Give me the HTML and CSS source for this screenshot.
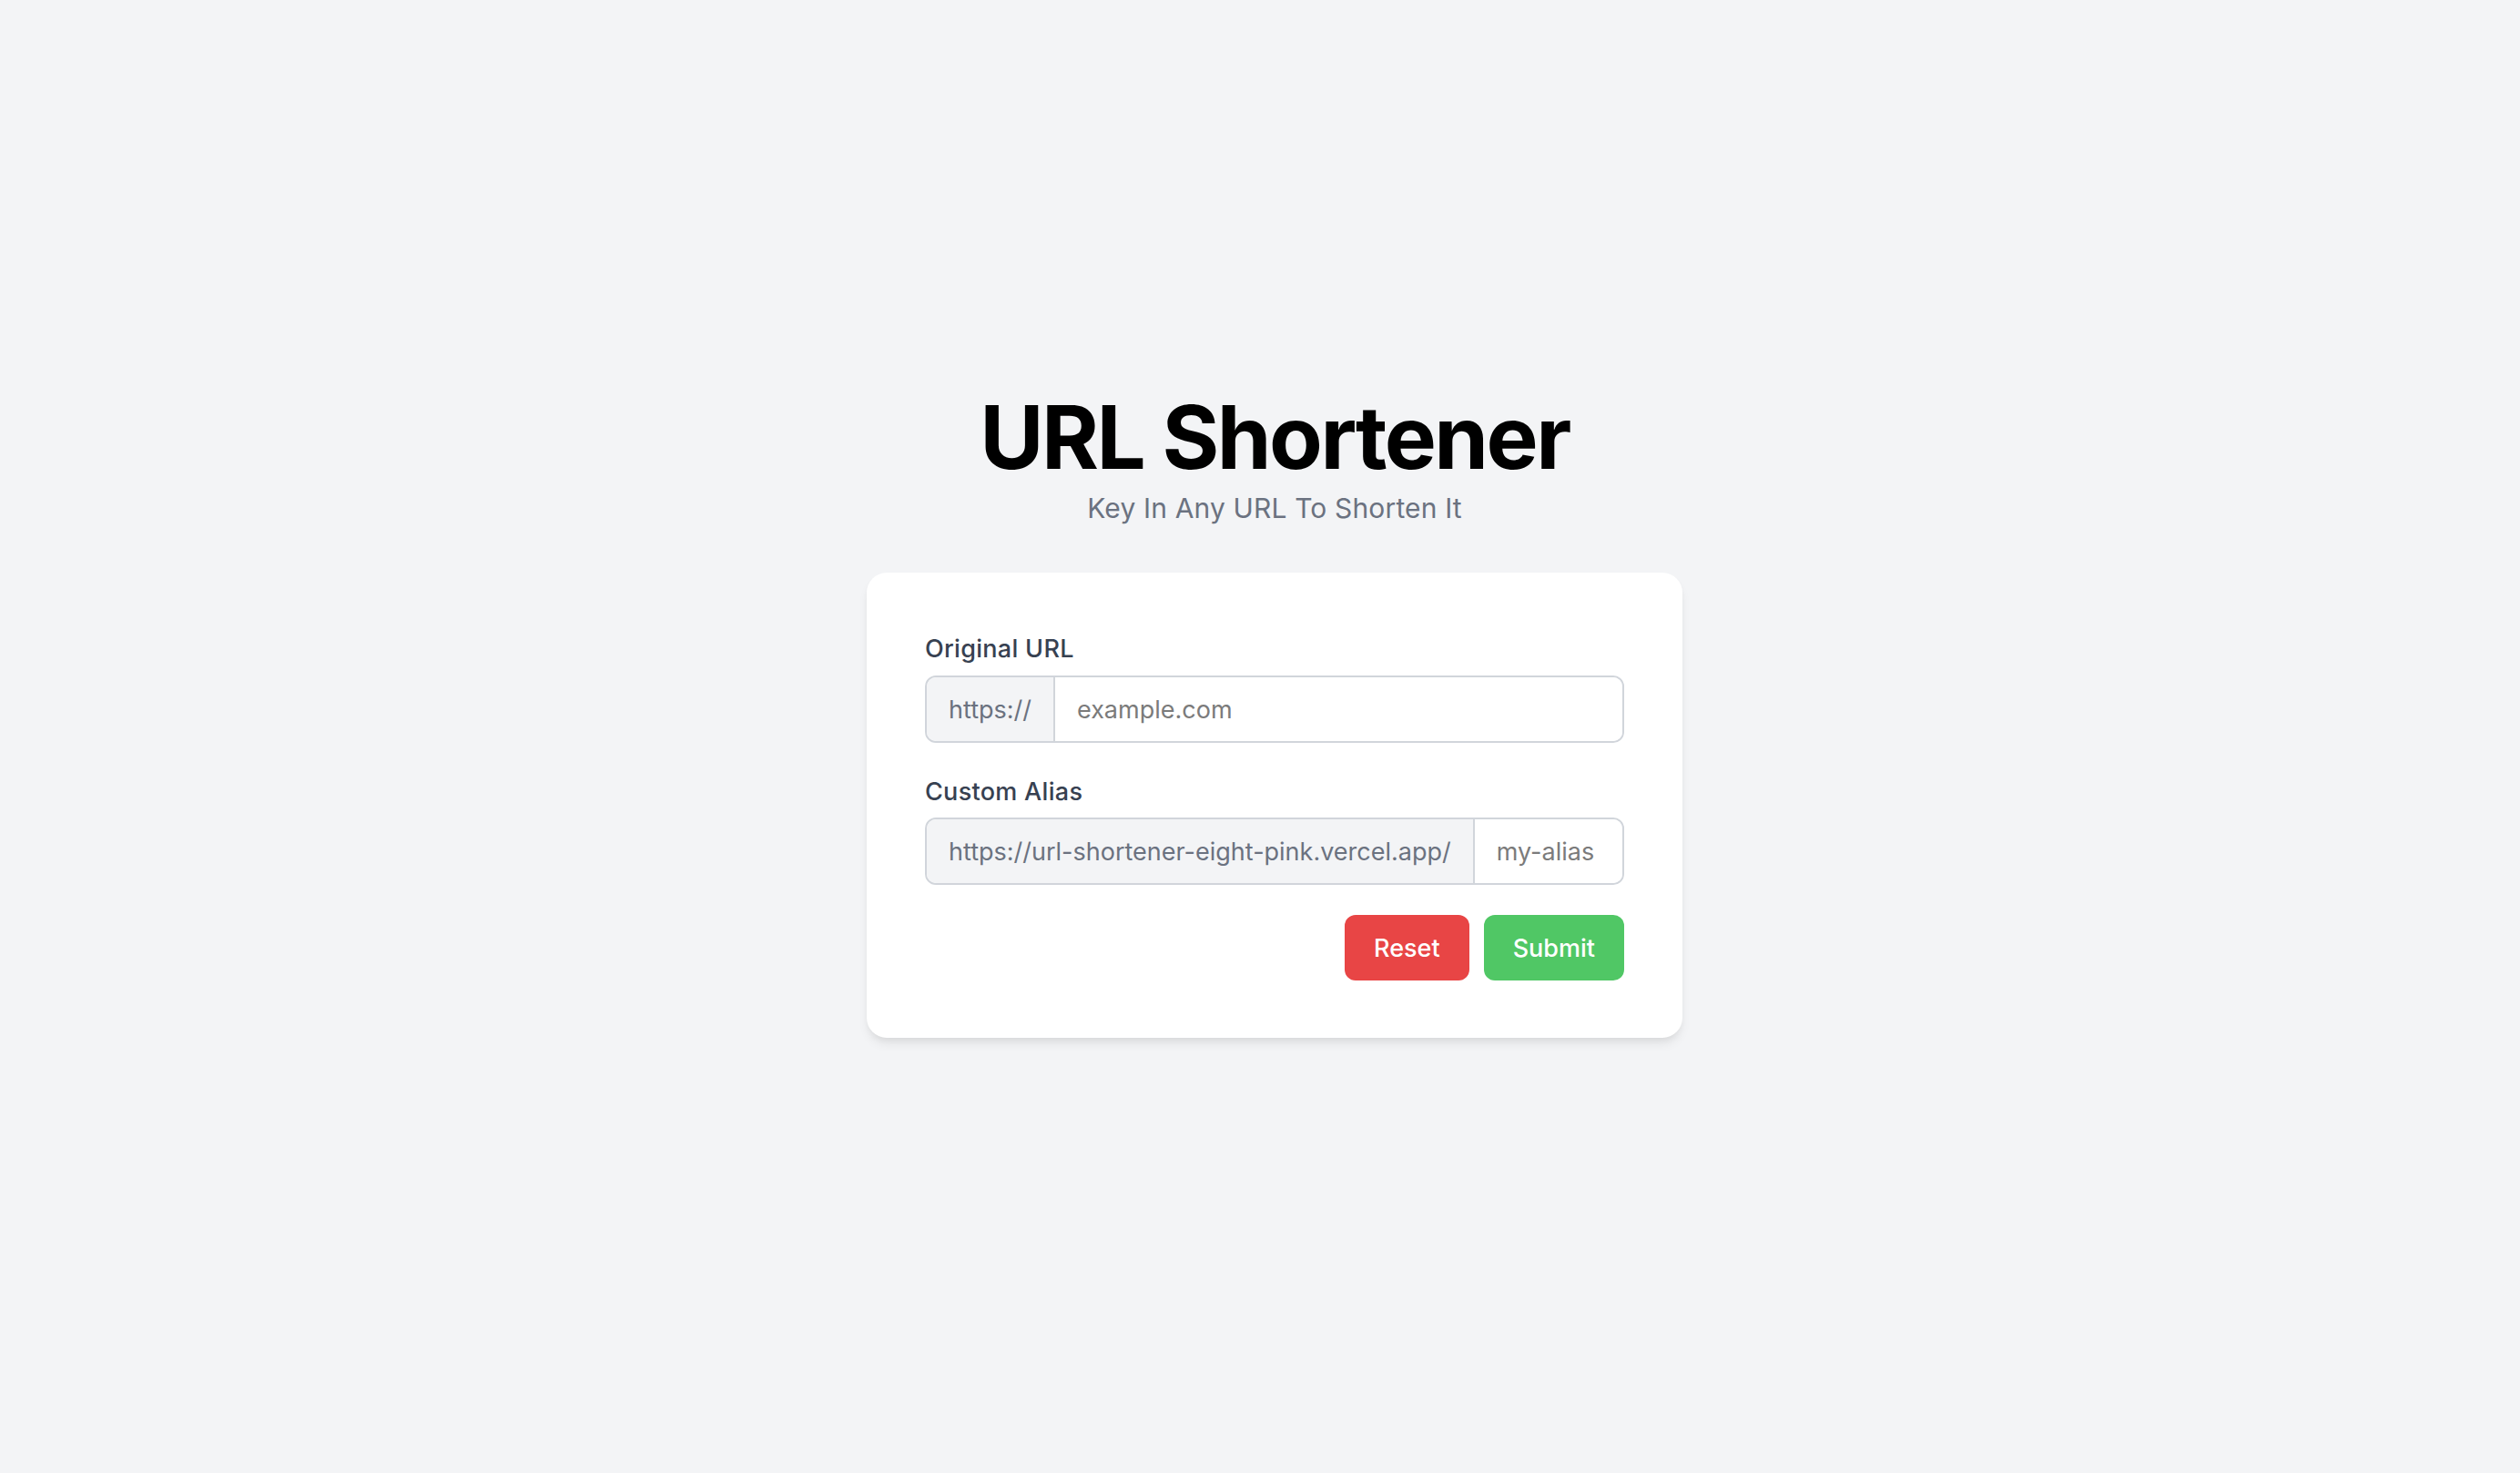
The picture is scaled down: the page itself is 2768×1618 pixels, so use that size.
FILE: index.html
```html
<!DOCTYPE html>
<html lang="en">
<head>
<meta charset="utf-8">
<title>URL Shortener</title>
<link rel="stylesheet" href="styles.css">
</head>
<body>
<main class="page">
  <header class="hero">
    <h1 class="title">URL Shortener</h1>
    <p class="subtitle">Key In Any URL To Shorten It</p>
  </header>
  <form class="card">
    <div class="field">
      <label class="label" for="url">Original URL</label>
      <div class="group">
        <span class="addon">https://</span>
        <input id="url" class="input" type="text" placeholder="example.com">
      </div>
    </div>
    <div class="field">
      <label class="label" for="alias">Custom Alias</label>
      <div class="group">
        <span class="addon">https://url-shortener-eight-pink.vercel.app/</span>
        <input id="alias" class="input" type="text" placeholder="my-alias">
      </div>
    </div>
    <div class="actions">
      <button type="reset" class="btn btn-reset">Reset</button>
      <button type="button" class="btn btn-submit">Submit</button>
    </div>
  </form>
</main>
</body>
</html>
```

FILE: styles.css
```css
* { box-sizing: border-box; }

html, body {
  margin: 0;
  padding: 0;
  background: #f3f4f6;
  font-family: Inter, "Noto Sans", "Liberation Sans", sans-serif;
}

.page {
  display: flex;
  flex-direction: column;
  align-items: center;
  padding: 432px 0 0 32px;
  min-height: 1618px;
}

.hero {
  display: flex;
  flex-direction: column;
  align-items: center;
}

.title {
  margin: 0;
  font-size: 96px;
  line-height: 96px;
  font-weight: 700;
  color: #000;
  letter-spacing: -2.5px;
}

.subtitle {
  margin: 8px 0 0;
  font-size: 30px;
  line-height: 45px;
  letter-spacing: 0.15px;
  color: #6b7280;
}

.card {
  margin-top: 48px;
  width: 896px;
  background: #fff;
  border-radius: 22px;
  padding: 64px 64px 63px;
  box-shadow: 0 8px 12px -2px rgba(0,0,0,0.08), 0 4px 8px -4px rgba(0,0,0,0.08);
  display: flex;
  flex-direction: column;
}

.field {
  display: flex;
  flex-direction: column;
}

.field + .field { margin-top: 34px; }

.label {
  font-size: 27px;
  line-height: 40px;
  font-weight: 500;
  letter-spacing: 0.3px;
  color: #374151;
  margin-bottom: 9px;
}

.field + .field .label { margin-bottom: 8px; }

.group {
  display: flex;
  height: 74px;
  border: 2px solid #d1d5db;
  border-radius: 12px;
  overflow: hidden;
}

.addon {
  display: flex;
  align-items: center;
  padding: 0 24px;
  background: #f3f4f6;
  border-right: 2px solid #d1d5db;
  color: #6b7280;
  font-size: 27px;
  white-space: nowrap;
  flex-shrink: 0;
}

.input {
  flex: 1;
  min-width: 0;
  border: 0;
  outline: none;
  padding: 0 24px;
  font-family: inherit;
  font-size: 27px;
  color: #111827;
  background: #fff;
}

.input::placeholder { color: #7b7b7b; }

.actions {
  display: flex;
  justify-content: flex-end;
  gap: 16px;
  margin-top: 33px;
}

.btn {
  height: 72px;
  padding: 0 32px;
  border: 0;
  border-radius: 12px;
  font-family: inherit;
  font-size: 27px;
  font-weight: 500;
  color: #fff;
}

.btn-reset { background: #e84545; }
.btn-submit { background: #50c765; }
```
